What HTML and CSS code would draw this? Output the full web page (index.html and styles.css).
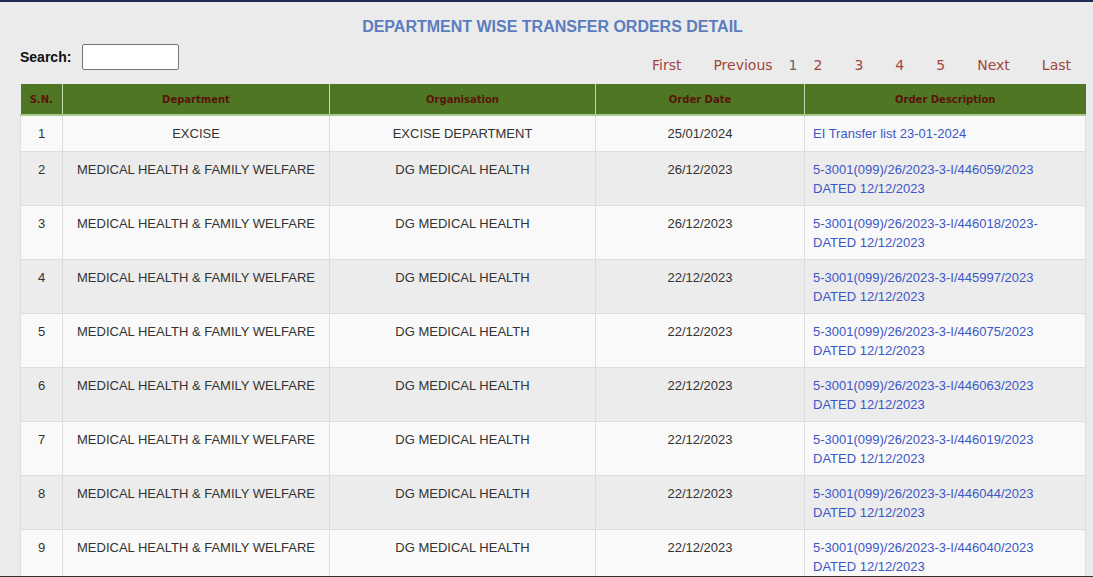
FILE: index.html
```html
<!DOCTYPE html>
<html>
<head>
<meta charset="utf-8">
<title>Department Wise Transfer Orders Detail</title>
<link rel="stylesheet" href="styles.css">
</head>
<body>
<div class="page">
  <h1 class="title">DEPARTMENT WISE TRANSFER ORDERS DETAIL</h1>
  <div class="toolbar">
    <label class="search">Search: <input type="text" class="search-input"></label>
    <nav class="pager">
      <a href="#" class="pg">First</a>
      <a href="#" class="pg">Previous</a>
      <span class="pg-cur">1</span>
      <a href="#" class="pg">2</a>
      <a href="#" class="pg">3</a>
      <a href="#" class="pg">4</a>
      <a href="#" class="pg">5</a>
      <a href="#" class="pg">Next</a>
      <a href="#" class="pg">Last</a>
    </nav>
  </div>
  <table class="grid">
    <colgroup>
      <col class="c-sn"><col class="c-dep"><col class="c-org"><col class="c-date"><col class="c-desc">
    </colgroup>
    <thead>
      <tr><th>S.N.</th><th>Department</th><th>Organisation</th><th>Order Date</th><th>Order Description</th></tr>
    </thead>
    <tbody>
      <tr class="first"><td>1</td><td>EXCISE</td><td>EXCISE DEPARTMENT</td><td>25/01/2024</td><td class="desc"><a href="#">EI Transfer list 23-01-2024</a></td></tr>
      <tr><td>2</td><td>MEDICAL HEALTH &amp; FAMILY WELFARE</td><td>DG MEDICAL HEALTH</td><td>26/12/2023</td><td class="desc"><a href="#">5-3001(099)/26/2023-3-I/446059/2023 DATED 12/12/2023</a></td></tr>
      <tr><td>3</td><td>MEDICAL HEALTH &amp; FAMILY WELFARE</td><td>DG MEDICAL HEALTH</td><td>26/12/2023</td><td class="desc"><a href="#">5-3001(099)/26/2023-3-I/446018/2023- DATED 12/12/2023</a></td></tr>
      <tr><td>4</td><td>MEDICAL HEALTH &amp; FAMILY WELFARE</td><td>DG MEDICAL HEALTH</td><td>22/12/2023</td><td class="desc"><a href="#">5-3001(099)/26/2023-3-I/445997/2023 DATED 12/12/2023</a></td></tr>
      <tr><td>5</td><td>MEDICAL HEALTH &amp; FAMILY WELFARE</td><td>DG MEDICAL HEALTH</td><td>22/12/2023</td><td class="desc"><a href="#">5-3001(099)/26/2023-3-I/446075/2023 DATED 12/12/2023</a></td></tr>
      <tr><td>6</td><td>MEDICAL HEALTH &amp; FAMILY WELFARE</td><td>DG MEDICAL HEALTH</td><td>22/12/2023</td><td class="desc"><a href="#">5-3001(099)/26/2023-3-I/446063/2023 DATED 12/12/2023</a></td></tr>
      <tr><td>7</td><td>MEDICAL HEALTH &amp; FAMILY WELFARE</td><td>DG MEDICAL HEALTH</td><td>22/12/2023</td><td class="desc"><a href="#">5-3001(099)/26/2023-3-I/446019/2023 DATED 12/12/2023</a></td></tr>
      <tr><td>8</td><td>MEDICAL HEALTH &amp; FAMILY WELFARE</td><td>DG MEDICAL HEALTH</td><td>22/12/2023</td><td class="desc"><a href="#">5-3001(099)/26/2023-3-I/446044/2023 DATED 12/12/2023</a></td></tr>
      <tr><td>9</td><td>MEDICAL HEALTH &amp; FAMILY WELFARE</td><td>DG MEDICAL HEALTH</td><td>22/12/2023</td><td class="desc"><a href="#">5-3001(099)/26/2023-3-I/446040/2023 DATED 12/12/2023</a></td></tr>
    </tbody>
  </table>
</div>
<div class="bottom-edge"></div>
</body>
</html>
```

FILE: styles.css
```css
html, body {
  margin: 0;
  padding: 0;
}
body {
  background: #ebebeb;
  font-family: "Liberation Sans", Arial, sans-serif;
  color: #333;
  border-top: 2px solid #1f2d55;
  overflow: hidden;
}
.page {
  padding: 0 8px 0 20px;
}
.title {
  margin: 0;
  padding-top: 15px;
  height: 20px;
  line-height: 20px;
  font-size: 16px;
  font-weight: bold;
  color: #5b7dbf;
  text-align: center;
}
.toolbar {
  display: flex;
  justify-content: space-between;
  height: 47px;
}
.search {
  display: flex;
  align-items: center;
  gap: 11px;
  height: 25px;
  margin-top: 7px;
  font-size: 14px;
  font-weight: bold;
  color: #111;
}
.search-input {
  box-sizing: border-box;
  width: 97px;
  height: 26px;
  margin: 0;
  border: 1px solid #767676;
  border-radius: 2px;
  background: #fff;
}
.pager {
  display: flex;
  align-items: center;
  height: 20px;
  margin-top: 18px;
  margin-right: -2px;
  font-family: "DejaVu Sans", Verdana, sans-serif;
  font-size: 14px;
}
.pg {
  color: #a2453f;
  text-decoration: none;
  padding: 0 16px;
}
.pg-cur {
  color: #666;
}
.grid {
  width: 1065px;
  table-layout: fixed;
  border-collapse: collapse;
}
.c-sn { width: 42px; }
.c-dep { width: 267px; }
.c-org { width: 266px; }
.c-date { width: 209px; }
.c-desc { width: 281px; }
.grid th {
  background: #4e7623;
  color: #5a140c;
  font-family: "DejaVu Sans", Verdana, sans-serif;
  font-size: 10px;
  font-weight: bold;
  line-height: 13px;
  padding: 9px 4px 8px;
  border-left: 1px solid #c4d9b0;
  border-bottom: 2px solid #a9c98d;
  text-align: center;
}
.grid th:first-child {
  border-left: none;
}
.grid td {
  font-size: 13px;
  line-height: 19px;
  padding: 8px 8px 7px;
  border: 1px solid #dddddd;
  text-align: center;
  vertical-align: top;
  color: #333;
}
.grid tr.first td {
  height: 20px;
  padding-top: 8px;
}
.grid tbody tr:nth-child(odd) td {
  background: #f9f9f9;
}
.grid tbody tr:nth-child(even) td {
  background: #ececec;
}
.grid td.desc {
  text-align: left;
}
.grid td.desc a {
  color: #3d56c6;
  text-decoration: none;
}
.bottom-edge {
  position: fixed;
  left: 0;
  right: 0;
  bottom: 0;
  height: 1px;
  background: #333;
}
```
